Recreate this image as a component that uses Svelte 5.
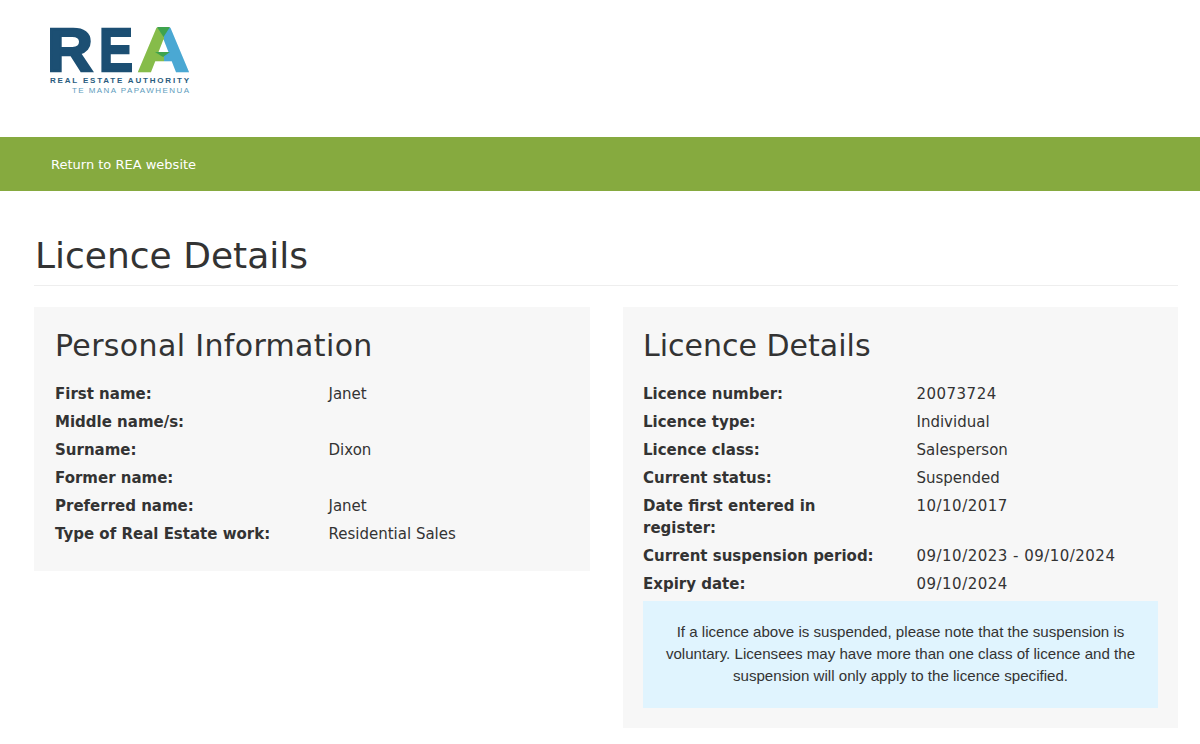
<script lang="ts">
  const personal = [
    ['First name:', 'Janet'],
    ['Middle name/s:', ''],
    ['Surname:', 'Dixon'],
    ['Former name:', ''],
    ['Preferred name:', 'Janet'],
    ['Type of Real Estate work:', 'Residential Sales']
  ];
  const licence = [
    ['Licence number:', '20073724'],
    ['Licence type:', 'Individual'],
    ['Licence class:', 'Salesperson'],
    ['Current status:', 'Suspended'],
    ['Date first entered in register:', '10/10/2017'],
    ['Current suspension period:', '09/10/2023 - 09/10/2024'],
    ['Expiry date:', '09/10/2024']
  ];
  const isNumeric = (s: string) => /^\d/.test(s);
</script>

<header class="top">
  <svg class="logo" width="146" height="90" viewBox="0 0 146 90" role="img" aria-label="REA Real Estate Authority">
    <defs>
      <linearGradient id="a-fill" x1="0" x2="1" y1="0" y2="0">
        <stop offset="0.5" stop-color="#86bc4a" />
        <stop offset="0.5" stop-color="#4aa8d3" />
      </linearGradient>
    </defs>
    <text x="1" y="61" class="big navy" textLength="46" lengthAdjust="spacingAndGlyphs">R</text>
    <text x="53" y="61" class="big navy" textLength="34" lengthAdjust="spacingAndGlyphs">E</text>
    <text x="92" y="61" class="big letter-a" textLength="51" lengthAdjust="spacingAndGlyphs">A</text>
    <polygon points="111,17 124,17 117.5,27" fill="#3fa34d" />
    <polygon points="109,42 124,42 117,47" fill="#3fa34d" />
    <text x="4" y="73" class="sub1" textLength="139">REAL ESTATE AUTHORITY</text>
    <text x="26" y="83" class="sub2" textLength="117">TE MANA PAPAWHENUA</text>
  </svg>
</header>

<nav class="bar"><a href="#top">Return to REA website</a></nav>

<main class="page">
  <h1>Licence Details</h1>
  <div class="columns">
    <section class="panel">
      <h2 class="wide">Personal Information</h2>
      {#each personal as [k, v]}
        <div class="row"><div class="k">{k}</div><div class="v">{v}</div></div>
      {/each}
    </section>
    <section class="panel with-note">
      <h2>Licence Details</h2>
      {#each licence as [k, v]}
        <div class="row"><div class="k">{k}</div><div class="v" class:num={isNumeric(v)}>{v}</div></div>
      {/each}
      <p class="note">
        If a licence above is suspended, please note that the suspension is voluntary. Licensees may have more than one class of licence and the suspension will only apply to the licence specified.
      </p>
    </section>
  </div>
</main>

<style>
  :global(body) {
    background: #fff;
    color: #333;
    font-family: "DejaVu Sans", Verdana, sans-serif;
    font-size: 15px;
    line-height: 22px;
  }
  .top {
    height: 137px;
    padding: 10px 0 0 46px;
    box-sizing: border-box;
  }
  .logo {
    display: block;
  }
  .big {
    font-family: "Liberation Sans", sans-serif;
    font-weight: 700;
    font-size: 61px;
    stroke-width: 2.4px;
  }
  .navy {
    fill: #1c4f73;
    stroke: #1c4f73;
  }
  .letter-a {
    fill: url(#a-fill);
    stroke: url(#a-fill);
  }
  .sub1, .sub2 {
    font-family: "Liberation Sans", sans-serif;
    font-weight: 700;
    font-size: 8px;
  }
  .sub1 {
    fill: #2a5c7e;
  }
  .sub2 {
    fill: #5d9cbc;
    font-weight: 400;
  }
  .bar {
    height: 54px;
    background: #86aa3f;
    padding-left: 51px;
    display: flex;
    align-items: center;
  }
  .bar a {
    color: #fff;
    font-size: 13px;
    padding-top: 1px;
    text-decoration: none;
  }
  .page {
    padding: 43px 22px 0 34px;
  }
  h1 {
    margin: 0 0 21px;
    padding: 0 0 7px 1px;
    border-bottom: 1px solid #eee;
    font-size: 36px;
    line-height: 44px;
    font-weight: 400;
    color: #333;
  }
  .columns {
    display: grid;
    grid-template-columns: 556px 555px;
    gap: 33px;
    align-items: start;
  }
  .panel {
    background: #f7f7f7;
    padding: 19px 20px 23px 21px;
  }
  .with-note {
    padding-left: 20px;
    padding-bottom: 20px;
  }
  h2 {
    margin: 0 0 14px;
    font-size: 30px;
    line-height: 40px;
    font-weight: 400;
    color: #333;
  }
  .wide {
    letter-spacing: 0.35px;
  }
  .row {
    display: flex;
    padding: 3px 0;
    color: #333;
  }
  .k {
    width: 273.5px;
    padding-right: 30px;
    box-sizing: border-box;
    font-weight: 700;
  }
  .v {
    flex: 1;
  }
  .num {
    letter-spacing: 0.48px;
  }
  .note {
    margin: 3px 0 0;
    background: #e0f4fe;
    padding: 20px 20px 21px;
    text-align: center;
    font-family: "Liberation Sans", Arial, sans-serif;
    font-size: 15.12px;
    line-height: 22px;
    color: #333;
  }
</style>
